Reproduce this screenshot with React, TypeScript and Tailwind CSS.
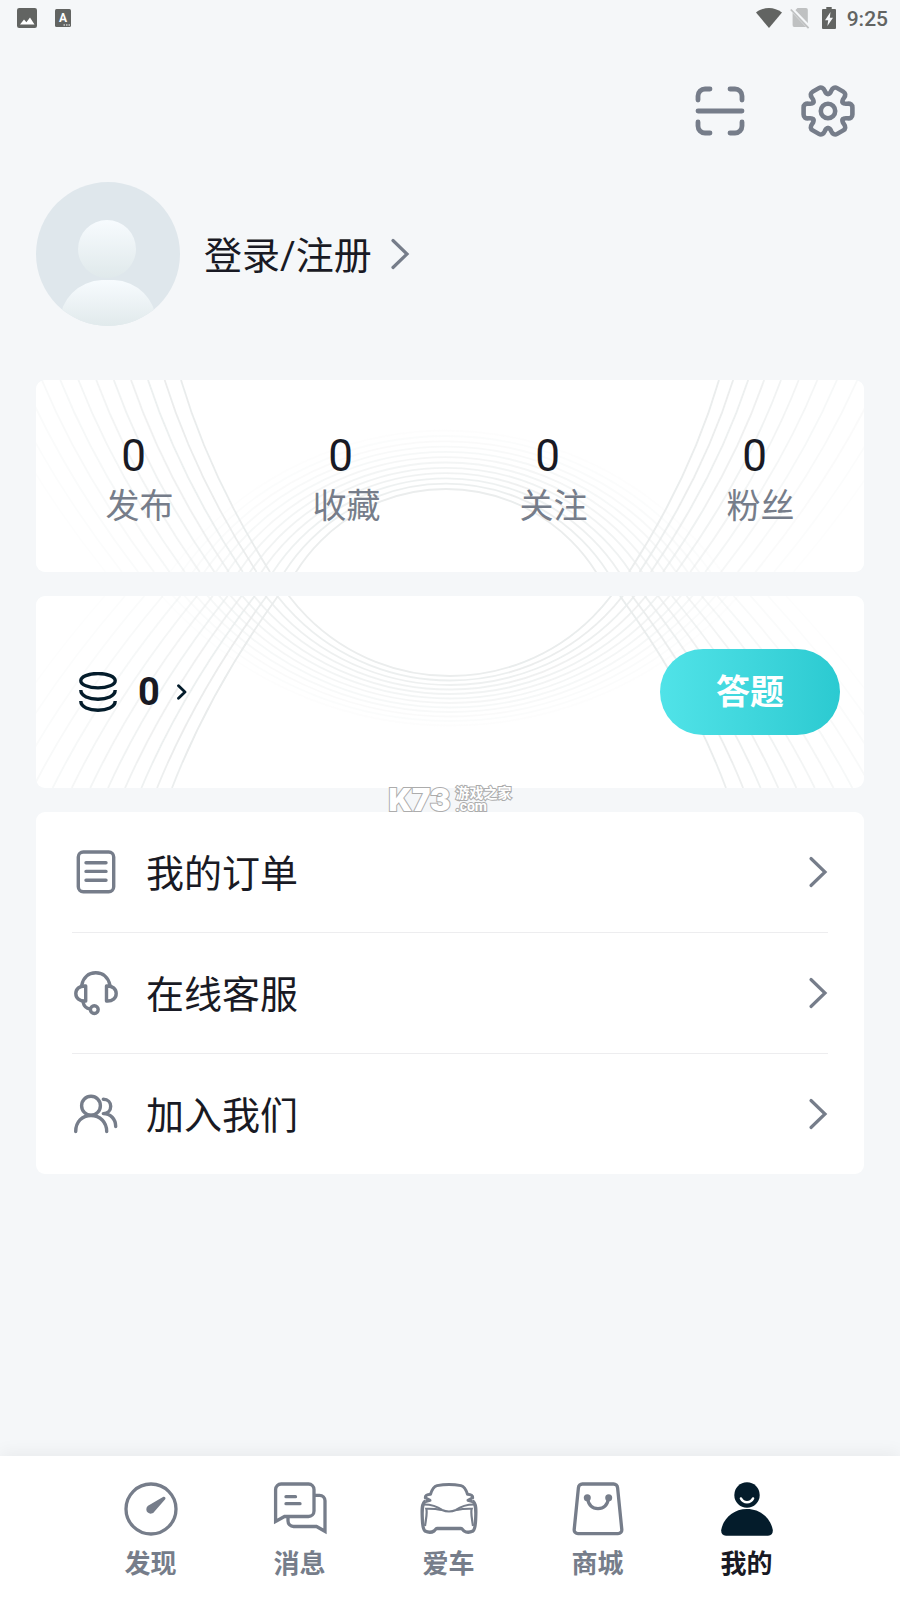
import type { ReactNode } from 'react';

const range = (n: number) => Array.from({ length: n }, (_, i) => i);

type Family = [start: number, step: number, growth: number];

const at = ([start, step, growth]: Family, k: number) => start + step * k + growth * k * k;

type PatternProps = {
  leftTop: Family;
  leftBottom: Family;
  rightTop: Family;
  rightBottom: Family;
  ring: { cx: number; r: number; rStep: number; cy: number; cyStep: number };
};

// Fading line bundles behind the two summary cards
function LinePattern({ leftTop, leftBottom, rightTop, rightBottom, ring }: PatternProps) {
  return (
    <svg
      className="absolute inset-0 h-full w-full"
      viewBox="0 0 828 192"
      preserveAspectRatio="none"
      fill="none"
      stroke="#eaeded"
      strokeWidth="1.8"
      aria-hidden="true"
    >
      {range(12).map((k) => {
        const lt = at(leftTop, k);
        const lb = at(leftBottom, k);
        const rt = at(rightTop, k);
        const rb = at(rightBottom, k);
        return (
          <g key={k} opacity={0.95 - k / 13}>
            <path d={`M${lt} 0Q${(lt + lb) / 2 - 16} 96 ${lb} 192`} />
            <path d={`M${rt} 0Q${(rt + rb) / 2 + 17} 96 ${rb} 192`} />
            <circle cx={ring.cx} cy={ring.cy + ring.cyStep * k} r={ring.r + ring.rStep * k} />
          </g>
        );
      })}
    </svg>
  );
}

function Chevron() {
  return (
    <svg className="h-8 w-5 shrink-0" viewBox="0 0 20 32" fill="none" stroke="#767d8a" strokeWidth="3.2" strokeLinecap="round" aria-hidden="true">
      <path d="M3 2.500L17 16L3 29.500" />
    </svg>
  );
}

function StatusBar() {
  return (
    <div className="flex h-9 items-center justify-between pl-[17px] pr-3 text-[#626462]">
      <div className="flex items-center gap-[18px]">
        <svg className="h-5 w-5" viewBox="0 0 20 20" aria-hidden="true">
          <rect width="20" height="20" rx="2.2" fill="currentColor" />
          <path d="M3 16.5l4-5 2.400 2.700L13 9.500l4.500 7z" fill="#fff" />
        </svg>
        <svg className="h-[18px] w-4" viewBox="0 0 16 18" aria-hidden="true">
          <rect width="16" height="18" rx="1.5" fill="currentColor" />
          <text x="8" y="13" textAnchor="middle" fontSize="12" fontWeight="700" fill="#fff" fontFamily="Roboto, sans-serif">A</text>
          <path d="M8.500 16h1.500M11 16h1.500M13.500 16h1.500" stroke="#fff" strokeWidth="1.2" />
        </svg>
      </div>
      <div className="flex items-center">
        <svg className="h-5 w-[26px]" viewBox="0 0 26 20" fill="currentColor" aria-hidden="true">
          <path d="M0 4.500C8-1.500 18-1.500 26 4.500L13 20z" />
        </svg>
        <svg className="ml-2 h-[22px] w-5" viewBox="0 0 20 22" aria-hidden="true">
          <path d="M7.500 1H16a1.800 1.800 0 0 1 1.800 1.800V20H4.300A1.800 1.800 0 0 1 2.600 18V6z" fill="#bfc1c2" />
          <path d="M1 1.500L19.500 20.500" stroke="#f5f7f9" strokeWidth="4" />
          <path d="M.8 2.500L18.600 21.200" stroke="#bfc1c2" strokeWidth="1.800" />
        </svg>
        <svg className="ml-3 h-[22px] w-[14px]" viewBox="0 0 14 22" aria-hidden="true">
          <path d="M4.300 0h5.400v2H13a1 1 0 0 1 1 1v18a1 1 0 0 1-1 1H1a1 1 0 0 1-1-1V3a1 1 0 0 1 1-1h3.300z" fill="currentColor" />
          <path d="M8.500 5L3 13.200h3.200L5.400 19 11 10.800H7.800z" fill="#f5f7f9" />
        </svg>
        <span className="ml-[11px] pt-px text-[21px] font-medium leading-9">9:25</span>
      </div>
    </div>
  );
}

function ScanIcon() {
  return (
    <svg className="h-[54px] w-[54px]" viewBox="-27 -27 54 54" fill="none" stroke="#767d8a" strokeWidth="4.800" strokeLinecap="round" aria-hidden="true">
      <path d="M-22 -11V-15A7 7 0 0 1 -15 -22H-10" />
      <path d="M10 -22H15A7 7 0 0 1 22 -15V-11" />
      <path d="M-22 11V15A7 7 0 0 0 -15 22H-10" />
      <path d="M10 22H15A7 7 0 0 0 22 15V11" />
      <path d="M-22 0H22" />
    </svg>
  );
}

function GearIcon() {
  return (
    <svg className="h-[54px] w-[54px]" viewBox="-27 -27 54 54" fill="none" stroke="#767d8a" strokeWidth="4.600" strokeLinecap="round" aria-hidden="true">
      {range(6).map((i) => (
        <path
          key={i}
          transform={`rotate(${i * 60})`}
          d="M14.700 -8.500C15.800 -6.900 17.300 -7 19.300 -7.300C22.500 -7.700 24.400 -6.200 24.400 -3.500V3.500C24.400 6.200 22.500 7.700 19.300 7.300C17.300 7 15.800 6.900 14.700 8.500"
        />
      ))}
      <circle r="7.200" />
    </svg>
  );
}

function Avatar() {
  return (
    <svg className="h-36 w-36 shrink-0" viewBox="0 0 144 144" aria-hidden="true">
      <defs>
        <linearGradient id="avatarFill" x1="0" y1="0" x2="0" y2="1">
          <stop offset="0" stopColor="#f7fbfe" />
          <stop offset="1" stopColor="#e0e9eb" />
        </linearGradient>
        <clipPath id="avatarClip">
          <circle cx="72" cy="72" r="72" />
        </clipPath>
      </defs>
      <g clipPath="url(#avatarClip)">
        <rect width="144" height="144" fill="#dfe7ec" />
        <circle cx="71" cy="67" r="29" fill="url(#avatarFill)" />
        <path d="M24 146V140A44 42 0 0 1 66 98H78A44 42 0 0 1 120 140V146Z" fill="url(#avatarFill)" />
      </g>
    </svg>
  );
}

const stats = [
  { label: '发布', value: 0 },
  { label: '收藏', value: 0 },
  { label: '关注', value: 0 },
  { label: '粉丝', value: 0 },
];

function StatsCard() {
  return (
    <section className="relative overflow-hidden rounded-[9px] bg-white">
      <LinePattern
        leftTop={[145, -16.2, -0.15]}
        leftBottom={[234, -13.3, -0.15]}
        rightTop={[683, 13.7, 0.45]}
        rightBottom={[593, 10, 0.45]}
        ring={{ cx: 410, r: 177, rStep: 14.8, cy: 286, cyStep: 9.5 }}
      />
      <div className="relative grid grid-cols-4 pb-[42px] pt-[50px]">
        {stats.map((s) => (
          <button key={s.label} type="button" className="flex flex-col items-center">
            <span className="pr-3 text-[44px] leading-[52px] text-[#191a24]">{s.value}</span>
            <span className="text-[34px] leading-[48px] text-[#767d8a]">{s.label}</span>
          </button>
        ))}
      </div>
    </section>
  );
}

function PointsCard() {
  return (
    <section className="relative overflow-hidden rounded-[9px] bg-white">
      <LinePattern
        leftTop={[242, -10.8, -0.45]}
        leftBottom={[136, -14.6, -0.35]}
        rightTop={[584, 11.8, 0.3]}
        rightBottom={[690, 17, 0.15]}
        ring={{ cx: 414, r: 202, rStep: 16.7, cy: -122, cyStep: -12.2 }}
      />
      <div className="relative flex h-48 items-center justify-between pl-[42px] pr-6">
        <button type="button" className="flex items-center">
          <svg className="h-10 w-10" viewBox="0 0 40 40" fill="none" stroke="#041c2b" strokeWidth="3.400" aria-hidden="true">
            <ellipse cx="20" cy="8.700" rx="17.200" ry="7.200" />
            <path d="M2.800 18C2.800 30.300 37.200 30.300 37.200 18" />
            <path d="M2.800 29C2.800 41.300 37.200 41.300 37.200 29" />
          </svg>
          <span className="ml-5 text-[38px] font-bold leading-[48px] text-[#191a24]">0</span>
          <svg className="ml-4 h-4 w-3" viewBox="0 0 12 16" fill="none" stroke="#041c2b" strokeWidth="2.800" strokeLinecap="round" strokeLinejoin="round" aria-hidden="true">
            <path d="M2.500 1.800L9 8L2.500 14.200" />
          </svg>
        </button>
        <button type="button" className="h-[86px] w-[180px] rounded-full bg-linear-to-r from-[#50e3e8] to-[#2bcad1] text-[34px] font-bold leading-[48px] text-white">
          答题
        </button>
      </div>
    </section>
  );
}

const menu: { label: string; icon: ReactNode }[] = [
  {
    label: '我的订单',
    icon: (
      <>
        <rect x="6.300" y="4" width="35.400" height="39.800" rx="5" />
        <path d="M14 14.700H34M14 23.400H34M14 32.200H34" />
      </>
    ),
  },
  {
    label: '在线客服',
    icon: (
      <>
        <path d="M9.700 16.500C11 8.500 16.500 3.800 23.800 3.800S36.600 8.500 38 16.500" />
        <path d="M13.700 17V32C7.500 32.500 3.800 29 3.800 24.500S7.500 16.500 13.700 17Z" />
        <path d="M34.500 17V32C40.500 32.500 44.200 29 44.200 24.500S40.500 16.500 34.500 17Z" />
        <path d="M11 33C12 37.500 14 39.500 18 40" />
        <circle cx="22.300" cy="40.600" r="3.900" />
      </>
    ),
  },
  {
    label: '加入我们',
    icon: (
      <>
        <circle cx="19" cy="15.700" r="9.400" />
        <path d="M3.700 41.500C3.700 32 10 25.500 19 25.500S34.700 32 34.700 41.500" />
        <path d="M31.300 9.300C36 9.300 38.700 12.500 38.700 16.300S36 23.600 31.300 23.600C38.500 23.600 43.700 29 43.700 36.500" />
      </>
    ),
  },
];

function Watermark() {
  return (
    <div className="pointer-events-none absolute -top-[26px] left-1/2 flex -translate-x-1/2 items-center gap-[5px] whitespace-nowrap text-white [-webkit-text-stroke:2px_#acacac] [paint-order:stroke]">
      <span className="font-[Inter,sans-serif] text-[31px] font-black leading-[28px]">K73</span>
      <span className="flex flex-col text-[14px] font-bold leading-[13px]">
        <span>游戏之家</span>
        <span>.com</span>
      </span>
    </div>
  );
}

function MenuCard() {
  return (
    <section className="relative rounded-[9px] bg-white px-9">
      <Watermark />
      <ul className="divide-y divide-[#ededef]">
        {menu.map((item) => (
          <li key={item.label}>
            <a href="#" className="flex h-[120px] items-center">
              <svg className="h-12 w-12" viewBox="0 0 48 48" fill="none" stroke="#767d8a" strokeWidth="3.400" strokeLinecap="round" strokeLinejoin="round" aria-hidden="true">
                {item.icon}
              </svg>
              <span className="ml-[26px] flex-1 pt-1 text-[38px] leading-[48px] text-[#191a24]">{item.label}</span>
              <Chevron />
            </a>
          </li>
        ))}
      </ul>
    </section>
  );
}

const tabs: { label: string; active?: boolean; icon: ReactNode }[] = [
  {
    label: '发现',
    icon: (
      <>
        <circle cx="30" cy="29" r="25" />
        <path d="M27 25.800L42 16.900C43.600 16.100 45.200 17.700 44.200 19.300L33.500 31.500A4.400 4.400 0 1 1 27 25.800Z" fill="currentColor" stroke="none" />
      </>
    ),
  },
  {
    label: '消息',
    icon: (
      <>
        <path d="M5.600 41.500V9.500A5.500 5.500 0 0 1 11.100 4H38.500A5.500 5.500 0 0 1 44 9.500V31A5.500 5.500 0 0 1 38.500 36.500H14.500Z" />
        <path d="M45 15.300H49.500A5.500 5.500 0 0 1 55 20.800V51.300L46.500 46.500H23.500A5.500 5.500 0 0 1 18 41V37.500" />
        <path d="M16 16.700H25.500M16 23.700H30" strokeLinecap="round" />
      </>
    ),
  },
  {
    label: '爱车',
    icon: (
      <>
        <path d="M6.500 21.500L11 20.300L6.300 17.800C6 15.500 8 14.400 11.500 14.200C13 9.500 14.500 6.500 18 5.600C25 4.200 35 4.200 42 5.600C45.500 6.500 47 9.500 48.500 14.200C52 14.400 54 15.500 53.700 17.800L49 20.300L53.500 21.500" strokeWidth="3" strokeLinejoin="round" />
        <path d="M6.500 21C2.500 23.500 3 31 3.300 38C3.600 44 3.500 49 6 51C9 52.500 13 52.300 15 51C16.500 50 16.500 48.500 18 48.500H42C43.500 48.500 43.500 50 45 51C47 52.300 51 52.500 54 51C56.500 49 56.400 44 56.700 38C57 31 57.500 23.500 53.500 21" />
        <path d="M5 24.500C13 24.500 19 27 23 30C27 31.700 33 31.700 37 30C41 27 47 24.500 55 24.500" strokeWidth="2.200" />
        <path d="M22 29.800C17 28.800 12 28.700 7.300 28.800C8.500 33 7 39 6 46M38 29.800C43 28.800 48 28.700 52.700 28.800C51.500 33 53 39 54 46" strokeWidth="2.200" />
      </>
    ),
  },
  {
    label: '商城',
    icon: (
      <>
        <path d="M14.500 4H45.500A4 4 0 0 1 49.600 7.800L53.800 49.500A3.800 3.800 0 0 1 50 53.700H10A3.800 3.800 0 0 1 6.200 49.500L10.400 7.800A4 4 0 0 1 14.500 4Z" />
        <path d="M19.300 18C20.500 24.500 24 28.700 30 28.700S39.500 24.500 40.700 18" />
        <circle cx="19.300" cy="17.700" r="3.500" fill="currentColor" stroke="none" />
        <circle cx="40.700" cy="17.700" r="3.500" fill="currentColor" stroke="none" />
      </>
    ),
  },
  {
    label: '我的',
    active: true,
    icon: (
      <>
        <circle cx="30" cy="15" r="12.700" fill="#041c2b" stroke="none" />
        <path d="M24 18.500C26.500 23.500 33.500 23.500 36 18.500" stroke="#fff" strokeWidth="2.600" strokeLinecap="round" />
        <path d="M30 29C44 29 54 39 55.800 50C56 53.500 54.500 55.700 51 55.700H9C5.500 55.700 4 53.500 4.200 50C6 39 16 29 30 29Z" fill="#041c2b" stroke="none" />
      </>
    ),
  },
];

function TabBar() {
  return (
    <nav className="mt-auto grid grid-cols-5 bg-white pb-[18px] pl-[76px] pr-[79px] pt-6 shadow-[0_-4px_16px_rgba(0,0,0,0.05)]">
      {tabs.map((tab) => (
        <a
          key={tab.label}
          href="#"
          aria-current={tab.active ? 'page' : undefined}
          className={tab.active ? 'flex flex-col items-center gap-2.5 text-[#191a24]' : 'flex flex-col items-center gap-2.5 text-[#767d8a]'}
        >
          <svg className="h-14 w-[60px]" viewBox="0 0 60 56" fill="none" stroke="currentColor" strokeWidth="3.300" aria-hidden="true">
            {tab.icon}
          </svg>
          <span className="text-[26px] font-bold leading-9">{tab.label}</span>
        </a>
      ))}
    </nav>
  );
}

export default function App() {
  return (
    <div className="flex min-h-screen flex-col bg-[#f5f7f9] font-[Roboto,'Noto_Sans_CJK_SC',sans-serif]" lang="zh-CN">
      <StatusBar />
      <header className="flex justify-end gap-[54px] pb-11 pr-[45px] pt-12">
        <button type="button" aria-label="扫一扫">
          <ScanIcon />
        </button>
        <button type="button" aria-label="设置">
          <GearIcon />
        </button>
      </header>

      <main className="flex flex-col px-9">
        <button type="button" className="flex items-center self-start">
          <Avatar />
          <span className="ml-6 mr-[18px] pt-1 text-[38px] leading-[48px] text-[#191a24]">登录/注册</span>
          <Chevron />
        </button>
        <div className="mt-[54px] flex flex-col gap-6">
          <StatsCard />
          <PointsCard />
          <MenuCard />
        </div>
      </main>

      <TabBar />
    </div>
  );
}
